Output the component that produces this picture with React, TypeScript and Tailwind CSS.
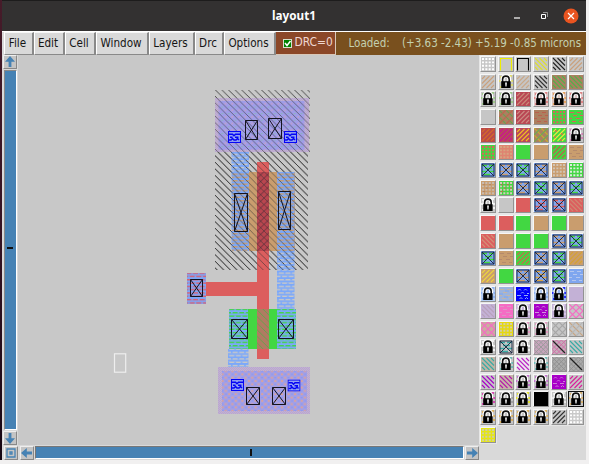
import React from "react";

type Kind =
  | "plain" | "back" | "fwd" | "cross" | "dots" | "dash" | "box" | "lock" | "bracket" | "dense" | "denseLine" | "chip";
type Tile = [Kind, string, string?, string?];

const GRAY = "#c6c6c6";
const RED = "#dc5e5e";
const DEEP = "#b8485a";
const GREEN = "#42d742";
const TAN = "#c99d6e";
const BROWN = "#ab8060";
const BLUE = "#7fa6ef";
const PINK = "#f56cc4";
const PURPLE = "#a800c8";
const LAV = "#c3b1d6";
const TEAL = "#39aaa5";

const tiles: Tile[] = [
  ["dots", GRAY, "#fff"], ["bracket", GRAY, "#eeee00"], ["bracket", GRAY, "#000"], ["back", GRAY, "#dede30"], ["back", GRAY, "#222"], ["fwd", GRAY, "#c9a07c"],
  ["fwd", GRAY, "#c9a07c"], ["lock", GRAY, "#e3df55"], ["fwd", GRAY, "#c9a888"], ["back", GRAY, "#333"], ["back", BROWN, "#56ae4b"], ["back", BROWN, "#56ae4b"],
  ["lock", GRAY, "#91c978"], ["lock", GRAY, "#91c978"], ["fwd", "#b94653", "#c98979"], ["lock", "#dfc6c6", "#dc7070"], ["lock", "#dfc6bd", "#e89840"], ["lock", "#dfc6c6", "#dc7070"],
  ["plain", GRAY], ["cross", BROWN, "#67a252", "#c06450"], ["fwd", "#b94653", "#cb8b83"], ["dash", BROWN, "#bb604d"], ["dots", GREEN, "#da625a"], ["dash", GREEN, "#da625a"],
  ["fwd", "#ba4a4b", "#d56b28"], ["fwd", DEEP, "#cb1492"], ["fwd", DEEP, "#efbf22"], ["cross", BROWN, "#c7ad30", "#6eac54"], ["fwd", GREEN, "#e9e93b", "#d66f4c"], ["lock", GRAY, "#d070ad"],
  ["dots", GREEN, "#da625a"], ["dots", "#df8370", "#d6a580"], ["plain", GREEN], ["plain", TAN], ["fwd", GREEN, "#b8654a"], ["dash", TAN, "#b58a6c"],
  ["box", BLUE, GREEN], ["box", BLUE, TAN], ["box", BLUE, GREEN], ["box", BLUE, TAN], ["dots", TAN, "#d2c4b4"], ["dots", GREEN, "#dceadc"],
  ["dots", TAN, "#c8bbb0", "#b18463"], ["dots", GREEN, "#d8c6bd", "#be684d"], ["box", BLUE, TAN], ["box", BLUE, GREEN], ["box", BLUE, TAN], ["box", BLUE, GREEN],
  ["lock", GRAY, "#fff"], ["plain", GRAY], ["plain", RED], ["box", BLUE, RED], ["box", BLUE, RED], ["back", RED, "#cf8872"],
  ["plain", RED], ["plain", RED], ["plain", GREEN], ["plain", TAN], ["plain", GREEN], ["plain", TAN],
  ["back", RED, "#d39176"], ["plain", TAN], ["plain", GREEN], ["plain", GREEN], ["box", BLUE, TAN], ["box", BLUE, GREEN],
  ["box", BLUE, GREEN], ["dash", TAN, "#b58a6c"], ["fwd", GREEN, "#bf704d"], ["box", BLUE, TAN], ["box", BLUE, GREEN], ["fwd", TAN, "#d5a233"],
  ["fwd", TAN, "#ebd43f"], ["plain", GREEN], ["box", BLUE, TAN], ["box", BLUE, "#dba544"], ["box", BLUE, GREEN], ["dash", BLUE, "#b4c6ee"],
  ["lock", "#b4ccf2", BLUE], ["dash", "#9cb3dd", "#c3b5a8", BLUE], ["chip", "#0000fa", "#91aaf5"], ["lock", "#b4ccf2", BLUE], ["lock", "#98b5f2", "#0000fa"], ["plain", LAV],
  ["back", LAV, "#b8a1bc"], ["dash", PINK, "#dd95c5"], ["lock", LAV, "#e0d5e8"], ["chip", PURPLE, "#d294dc"], ["lock", LAV, "#dfccec"], ["cross", GRAY, PINK],
  ["cross", "#caad9f", PINK], ["dots", "#e6d810", "#d2cda8"], ["lock", GRAY, "#e88cbd"], ["lock", GRAY, "#e88cbd"], ["cross", GRAY, "#a7a7a7"], ["cross", GRAY, "#c7a481", "#b6b6b6"],
  ["lock", GRAY, "#fff"], ["box", GRAY, TEAL], ["lock", GRAY, "#fff"], ["dense", "#c7a5bc", "#9d9a9c"], ["denseLine", "#c5adba", "#d070a8"], ["back", GRAY, TEAL],
  ["back", "#c0b5a5", TEAL], ["lock", GRAY, "#54b7b2"], ["back", "#ece7ed", "#ba25c5"], ["lock", GRAY, "#54b7b2"], ["dense", "#aaa", "#929292"], ["denseLine", "#aaa", "#929292"],
  ["back", GRAY, PURPLE], ["back", "#c6b6a8", "#b51caa"], ["lock", GRAY, "#c05acf"], ["lock", GRAY, "#c05acf"], ["chip", PURPLE, "#cf7adb"], ["fwd", GRAY, "#d91e9b"],
  ["lock", GRAY, "#dc1eaa"], ["lock", GRAY, "#969696"], ["lock", GRAY, "#e7e700"], ["plain", "#000"], ["lock", GRAY, "#f4f4f4"], ["lock", GRAY, "#d7a754"],
  ["lock", GRAY, "#dea940"], ["lock", GRAY, "#dea940"], ["lock", GRAY, "#dea940"], ["lock", GRAY, "#dea940"], ["fwd", GRAY, "#333"], ["dots", "#c9c9c9", "#fff"],
  ["dots", "#e6e612", "#cdcdab"],
];

const BACK = "M1 1L13 13M5.5 1L13 8.5M10 1L13 4M1 5.5L8.5 13M1 10L4 13";
const FWD = "M13 1L1 13M8.5 1L1 8.5M4 1L1 4M13 5.5L5.5 13M13 10L10 13";
const MESH = "M0 0L14 14M4.6 0L14 9.4M9.3 0L14 4.7M0 4.6L9.4 14M0 9.3L4.7 14M14 0L0 14M9.4 0L0 9.4M4.7 0L0 4.7M14 4.6L4.6 14M14 9.3L9.3 14";

function Lock({ color }: { color: string }) {
  return (
    <>
      <path d="M1 2h2M10 1h3M0 6h2M12 6h2M2 9h1M12 10h2M1 12h2" stroke={color} strokeWidth="1.5" />
      <path d="M3.6 7V4.3C3.6-.3 10.2-.3 10.2 4.3V7" fill="none" stroke="#fff" strokeWidth="4" />
      <path d="M3.6 7V4.3C3.6 .1 10.2 .1 10.2 4.3V7" fill="none" stroke="#111" strokeWidth="1.6" />
      <path d="M2.2 6.2h9.4V13H2.2z" fill="#000" />
      <path d="M6 7.4h2l-.4 4.2H6.4z" fill="#ddd" />
    </>
  );
}

function Swatch({ tile }: { tile: Tile }) {
  const [kind, bg, a = "#000", b] = tile;
  return (
    <svg viewBox="0 0 14 14" className="block size-[14px]">
      <rect width="14" height="14" fill={bg} />
      {kind === "back" && <path d={BACK} stroke={a} strokeWidth="1.1" />}
      {kind === "fwd" && <path d={FWD} stroke={a} strokeWidth="1.1" />}
      {kind === "fwd" && b && <path d="M3 3h2M9 6h2M2 9h2M8 12h2" stroke={b} strokeWidth="1.5" />}
      {kind === "cross" && (
        <>
          <path d="M0 0L14 14M7 0L14 7M0 7L7 14" stroke={a} strokeWidth="1.2" />
          <path d="M14 0L0 14M7 0L0 7M14 7L7 14" stroke={b ?? a} strokeWidth="1.2" />
        </>
      )}
      {(kind === "dense" || kind === "denseLine") && <path d={MESH} stroke={a} />}
      {kind === "denseLine" && <path d="M1 1L13 13" stroke="#222" strokeWidth="1.3" />}
      {kind === "dots" && (
        <>
          <path d="M1 2h12M1 5.4h12M1 8.8h12M1 12.2h12" stroke={a} strokeWidth="1.9" strokeDasharray="2 1.35" />
          {b && <path d="M2 3.7h2M8 3.7h2M5 7.1h2M11 7.1h2M2 10.5h2" stroke={b} />}
        </>
      )}
      {kind === "dash" && (
        <>
          <path d="M1 2.5h4M8 2.5h4M4 5.5h4M11 5.5h3M0 8.5h3M7 8.5h4M3 11.5h4M10 11.5h3" stroke={a} strokeWidth="1.1" />
          {b && <path d="M6 4h4M0 7h4M5 10h4" stroke={b} />}
        </>
      )}
      {kind === "chip" && <path d="M2 3.5l1.5-1.5L5 3.5M8 3.5L9.5 2 11 3.5M5 6.5L6.5 5 8 6.5M11 6.5h2M1 8.5h4M8 8.5h4M3.5 12L5 10.5 6.5 12M9 12l1.5-1.5L12 12" fill="none" stroke={a} />}
      {kind === "box" && (
        <>
          <path d="M1 2.5h5M8 2.5h5M4 5.5h7M1 8.5h5M8 8.5h5M3 11.5h6" stroke={a} strokeWidth="1.3" />
          <path d="M1 1h12v12H1zM1 1L13 13M13 1L1 13" fill="none" stroke="#15203a" strokeWidth=".9" />
        </>
      )}
      {kind === "bracket" && <path d="M1.5 13.5V1.5h11v12" fill="none" stroke={a} strokeWidth="1.1" />}
      {kind === "lock" && <Lock color={a} />}
    </svg>
  );
}

function Contact({ x, y, w, h }: { x: number; y: number; w: number; h: number }) {
  return (
    <path
      d={`M${x} ${y}h${w}v${h}h${-w}zl${w} ${h}M${x + w} ${y}l${-w} ${h}`}
      fill="none" stroke="#141420" strokeWidth="1"
    />
  );
}

function Via({ x, y }: { x: number; y: number }) {
  return (
    <svg x={x} y={y} width="13" height="12" viewBox="0 0 13 12">
      <rect x=".5" y=".5" width="12" height="11" fill="#93a2f3" stroke="#0505f5" strokeWidth="1.1" />
      <path d="M1 3.2h3.5l1.5 1.5 1.5-1.5H12M2 6.3h2.5M7 6.3h3.5M1 9h2l1.5-1.5L6 9h2l1.5-1.5L11 9" fill="none" stroke="#0505f5" strokeWidth="1.5" />
    </svg>
  );
}

function LayoutCanvas() {
  return (
    <svg viewBox="18 55 461 390" className="block h-[390px] w-[461px] bg-[#c8c8c8]">
      <defs>
        <pattern id="well" width="6.6" height="6.6" patternUnits="userSpaceOnUse">
          <path d="M-1 -1L7.6 7.6M-1 5.6L1 7.6M5.6 -1L7.6 1" stroke="#333" strokeWidth=".85" />
        </pattern>
        <pattern id="metal" width="6.6" height="6.6" patternUnits="userSpaceOnUse">
          <path d="M0 1h6.6M0 4.3h6.6" stroke="#7ba8fa" strokeWidth="1.8" />
          <path d="M0 2.65h1.6M3.3 5.95h1.6" stroke="#7ba8fa" strokeWidth="1.5" />
        </pattern>
        <pattern id="speck" width="6.6" height="6.6" patternUnits="userSpaceOnUse">
          <path d="M.4 1.5h2M3.8 4.8h2" stroke="#e0a294" strokeWidth="1.5" />
          <path d="M3.6 1.5h2M.6 4.8h2" stroke="#8798f5" strokeWidth="1.1" />
        </pattern>
        <pattern id="speckDark" width="6.6" height="6.6" patternUnits="userSpaceOnUse">
          <path d="M3.7 1.5h1.5" stroke="#7fc0a8" strokeWidth=".9" />
          <path d="M.5 4.7h1.5" stroke="#d9a0b4" strokeWidth="1.1" />
        </pattern>
        <pattern id="lavender" width="2" height="2" patternUnits="userSpaceOnUse">
          <rect width="2" height="2" fill="#c3afd3" />
          <path d="M0 .5h1M1 1.5h1" stroke="#b8a8cf" />
        </pattern>
        <pattern id="channel" width="6.6" height="6.6" patternUnits="userSpaceOnUse">
          <path d="M-1 -1L7.6 7.6" stroke="#5ea64a" strokeWidth=".9" />
        </pattern>
        <pattern id="gate" width="6.6" height="6.6" patternUnits="userSpaceOnUse">
          <path d="M-1 7.6L7.6 -1" stroke="#7b3542" />
        </pattern>
      </defs>

      <path d="M215 90h95v62h-2v118h-93z" fill="url(#well)" />
      <rect x="215" y="98" width="94" height="54" fill="url(#lavender)" />
      <rect x="218.5" y="101" width="86" height="49" fill="#a09de8" />
      <rect x="218.5" y="101" width="86" height="49" fill="url(#speckDark)" />
      <rect x="232" y="172" width="63" height="79" fill={TAN} />
      <rect x="231.5" y="152" width="17.5" height="99" fill="url(#metal)" />
      <rect x="277" y="172" width="17.5" height="137" fill="url(#metal)" />
      <rect x="257" y="162" width="12" height="197" fill={RED} />
      <rect x="206" y="282" width="52" height="14" fill={RED} />
      <rect x="257" y="172" width="12" height="79" fill="#b9464f" />
      <rect x="257" y="172" width="12" height="79" fill="url(#gate)" />
      <path d="M215 98h94v54h-1v118h-93z" fill="url(#well)" opacity=".65" />
      <Via x={228} y={131} />
      <Via x={284} y={131} />
      <Contact x={245.5} y={120.5} w={12} h={19} />
      <Contact x={268.5} y={118.5} w={13} h={20} />
      <Contact x={234.5} y={193.5} w={13} h={38} />
      <Contact x={278.5} y={191.5} w={12} h={38} />

      <rect x="187" y="273" width="19" height="31" fill="#dc5e6c" />
      <rect x="187" y="273" width="19" height="31" fill="url(#metal)" />
      <Contact x={190.5} y={279.5} w={12} h={17} />

      <rect x="229" y="309" width="67" height="40" fill={GREEN} />
      <rect x="229" y="309" width="19" height="40" fill="url(#metal)" />
      <rect x="277" y="309" width="19" height="40" fill="url(#metal)" />
      <rect x="257" y="309" width="12" height="40" fill="#b17b62" />
      <rect x="257" y="309" width="12" height="40" fill="url(#channel)" />
      <Contact x={231.5} y={319.5} w={16} h={19} />
      <Contact x={278.5} y={319.5} w={15} h={19} />
      <rect x="228" y="349" width="20.5" height="19" fill="url(#metal)" />

      <rect x="218" y="367" width="92" height="47" fill="url(#lavender)" />
      <rect x="222" y="371" width="85" height="40" fill="#a39fe5" />
      <rect x="222" y="371" width="85" height="40" fill="url(#speck)" />
      <Via x={231} y={379} />
      <Via x={287.5} y={379.5} />
      <Contact x={246.5} y={387.5} w={13} h={17} />
      <Contact x={272.5} y={387.5} w={13} h={17} />
      <rect x="114.5" y="353.8" width="11.2" height="18.4" fill="none" stroke="#eee" strokeWidth="1.2" />
    </svg>
  );
}

function Arrow({ turn }: { turn: string }) {
  return (
    <div className="size-[14px] shrink-0 border border-t-[#eee] border-l-[#eee] border-r-[#888] border-b-[#888] bg-[#c4c4c4]">
      <svg viewBox="0 0 12 12" className={`block size-3 ${turn}`}>
        <path d="M6 0L11 5.8H7.4V11H4.6V5.8H1z" fill="#4682b4" />
      </svg>
    </div>
  );
}

const menus = [
  ["File", "w-[30px]"], ["Edit", "w-[31px]"], ["Cell", "w-[31px]"], ["Window", "w-[53px]"],
  ["Layers", "w-[46px]"], ["Drc", "w-[29px]"], ["Options", "w-[52px]"],
];

export default function App() {
  return (
    <div className="flex h-[464px] w-[589px] flex-col overflow-hidden bg-[#f1f0f0] font-['DejaVu_Sans_Condensed','DejaVu_Sans',sans-serif]">
      <div className="flex h-[460px]">
        <div className="w-[2px] shrink-0 bg-linear-to-b from-[#461b29] via-[#351323] to-[#160713]" />
        <div className="flex w-[584px] flex-col bg-[#d9d9d9]">
          <header className="grid h-[31px] shrink-0 grid-cols-[1fr_auto_1fr] items-center border-t border-[#1d1c1c] bg-[#333131] text-white">
            <span />
            <h1 className="font-['Noto_Sans',sans-serif] text-[11.7px] font-bold">layout1</h1>
            <div className="flex items-center justify-end pr-[7px]">
              <svg width="36" height="16" className="block">
                <path d="M1 10h6" stroke="white" strokeWidth="1.2" />
                <path d="M28.5 6.5h4v4h-4z" stroke="white" fill="none" />
                <path d="M30 4.5h4.5v4.5" stroke="#aaa" fill="none" strokeWidth=".8" />
              </svg>
              <svg width="16" height="16" className="ml-[14px] block">
                <circle cx="8" cy="8" r="7.5" fill="#e95420" />
                <path d="M5 5l6 6M11 5l-6 6" stroke="white" strokeWidth="1.2" />
              </svg>
            </div>
          </header>
          <nav className="flex h-6 shrink-0 border-t border-white pl-[1.5px] text-[11.6px] whitespace-nowrap text-[#151515]">
            {menus.map(([label, width]) => (
              <button key={label} className={`${width} h-[23px] shrink-0 border border-t-[#f7f7f7] border-l-white border-r-2 border-r-[#898989] border-b-[#898989] bg-[#d9d9d9] pr-px pb-px text-center leading-5`}>
                {label}
              </button>
            ))}
            <div className="flex w-[60px] shrink-0 items-center border-r border-b border-[#d8c7b8] bg-[#8b4728] pl-[7px] text-[#efd7d2]">
              <svg width="9" height="9" className="mr-[3px] block shrink-0">
                <rect x=".5" y=".5" width="8" height="8" fill="#008000" stroke="#d6e0cc" />
                <path d="M2 4l2 2.5L7.5 2" fill="none" stroke="white" strokeWidth="1.5" />
              </svg>
              <span className="text-[11.9px]">DRC=0</span>
            </div>
            <div className="flex flex-1 items-center bg-[#79501e] pl-[13px] text-[11.5px] text-[#c4d0b0]">
              <span className="w-[53.5px]">Loaded:</span>
              <span>(+3.63 -2.43) +5.19 -0.85 microns</span>
            </div>
          </nav>
          <main className="flex h-[405px]">
            <section className="w-[477px] shrink-0">
              <div className="flex h-[390px]">
                <div className="flex w-4 shrink-0 flex-col items-center">
                  <Arrow turn="rotate-0" />
                  <div className="my-px flex w-[13px] flex-1 items-center justify-center border border-t-[#888] border-l-[#888] border-r-white border-b-white bg-[#4682b4] pb-[4px]">
                    <div className="h-[2px] w-[6px] bg-[#111]" />
                  </div>
                  <Arrow turn="rotate-180" />
                </div>
                <LayoutCanvas />
              </div>
              <div className="flex h-[15px] items-center gap-px pl-[1.5px]">
                <div className="mr-px size-[14px] shrink-0 border border-t-[#eee] border-l-[#eee] border-r-[#888] border-b-[#888] bg-[#c4c4c4] p-px">
                  <svg viewBox="0 0 10 10" className="block size-[10px]">
                    <path d="M1 1h8v8H1zM4 4h2v2H4z" fill="none" stroke="#4682b4" strokeWidth="1.3" />
                  </svg>
                </div>
                <Arrow turn="-rotate-90" />
                <div className="flex h-[13px] flex-1 items-center justify-center border border-t-[#777] border-l-[#777] border-r-white border-b-white bg-[#4682b4] pl-[4px]">
                  <div className="h-[7px] w-[2px] bg-[#111]" />
                </div>
                <Arrow turn="rotate-90" />
              </div>
            </section>
            <aside className="grid h-max w-[106px] shrink-0 auto-rows-[17.67px] grid-cols-[repeat(6,17.7px)] pt-px pl-[1px]">
              {tiles.map((tile, i) => (
                <div
                  key={i}
                  className={`size-4 border ${i === 119 ? "border-[#111]" : "border-t-[#f6f6f6] border-l-[#f6f6f6] border-r-[#929292] border-b-[#929292]"} shadow-[0_0_0_1px_#e6e6e6]`}
                >
                  <Swatch tile={tile} />
                </div>
              ))}
            </aside>
          </main>
        </div>
      </div>
    </div>
  );
}
